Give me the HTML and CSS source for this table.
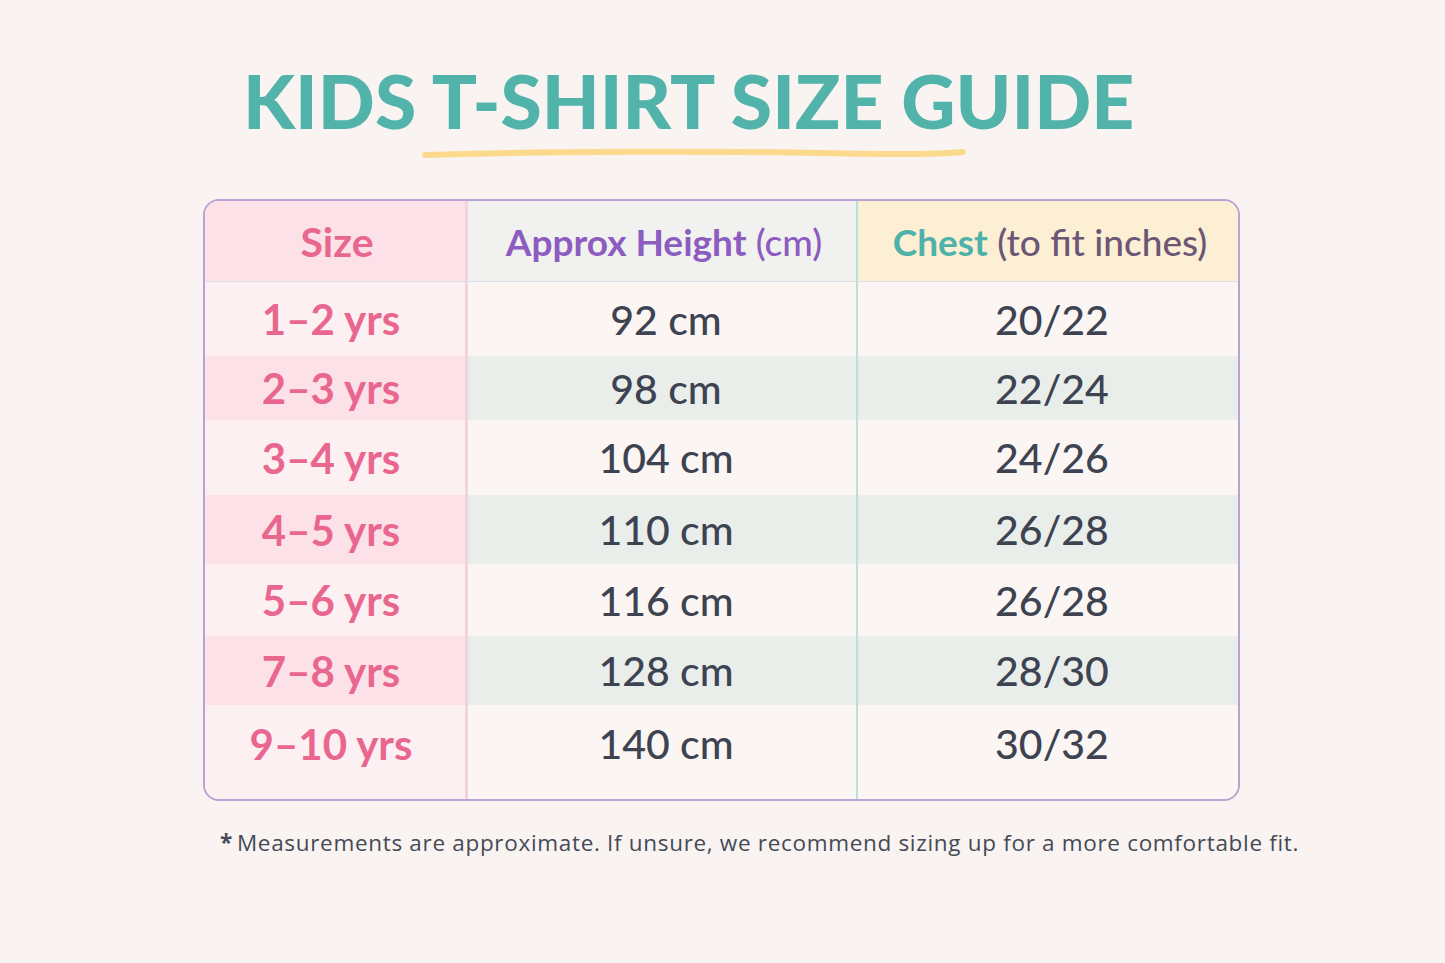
FILE: index.html
```html
<!DOCTYPE html>
<html lang="en">
<head>
<meta charset="utf-8">
<title>Kids T-Shirt Size Guide</title>
<link rel="stylesheet" href="styles.css">
</head>
<body>
<main class="page">
  <header class="title-block">
    <h1 class="title">KIDS T-SHIRT SIZE GUIDE</h1>
    <svg class="underline" width="546" height="12" viewBox="0 0 546 12" aria-hidden="true">
      <path d="M4 7 C 120 3, 300 3, 400 5 S 520 6, 542 4" fill="none" stroke="#fcd98c" stroke-width="6" stroke-linecap="round"/>
    </svg>
  </header>

  <section class="table">
    <div class="row head">
      <div class="cell c1"><span class="pink size-head">Size</span></div>
      <div class="cell c2"><span class="purple">Approx Height</span>&nbsp;<span class="purple light">(cm)</span></div>
      <div class="cell c3"><span class="teal">Chest</span>&nbsp;<span class="plum">(to fit inches)</span></div>
    </div>
    <div class="row odd r1">
      <div class="cell c1"><span class="pink">1–2 yrs</span></div>
      <div class="cell c2">92 cm</div>
      <div class="cell c3">20/22</div>
    </div>
    <div class="row even r2">
      <div class="cell c1"><span class="pink">2–3 yrs</span></div>
      <div class="cell c2">98 cm</div>
      <div class="cell c3">22/24</div>
    </div>
    <div class="row odd r3">
      <div class="cell c1"><span class="pink">3–4 yrs</span></div>
      <div class="cell c2">104 cm</div>
      <div class="cell c3">24/26</div>
    </div>
    <div class="row even r4">
      <div class="cell c1"><span class="pink">4–5 yrs</span></div>
      <div class="cell c2">110 cm</div>
      <div class="cell c3">26/28</div>
    </div>
    <div class="row odd r5">
      <div class="cell c1"><span class="pink">5–6 yrs</span></div>
      <div class="cell c2">116 cm</div>
      <div class="cell c3">26/28</div>
    </div>
    <div class="row even r6">
      <div class="cell c1"><span class="pink">7–8 yrs</span></div>
      <div class="cell c2">128 cm</div>
      <div class="cell c3">28/30</div>
    </div>
    <div class="row odd r7">
      <div class="cell c1"><span class="pink">9–10 yrs</span></div>
      <div class="cell c2">140 cm</div>
      <div class="cell c3">30/32</div>
    </div>
  </section>

  <p class="note"><span class="star">*</span>Measurements are approximate. If unsure, we recommend sizing up for a more comfortable fit.</p>
</main>
</body>
</html>
```

FILE: styles.css
```css
html, body {
  margin: 0;
  padding: 0;
  background: #f9f4f1;
}

body {
  font-family: Lato, "Open Sans", "Liberation Sans", sans-serif;
  color: #3d4350;
  width: 1445px;
  height: 963px;
  overflow: hidden;
}

.page {
  display: flex;
  flex-direction: column;
  padding: 58px 0 0 203px;
}

.title-block {
  display: flex;
  flex-direction: column;
  padding-left: 40px;
}

.title {
  margin: 0;
  font-family: Lato, "Open Sans", sans-serif;
  font-weight: 900;
  font-size: 75px;
  line-height: 84px;
  letter-spacing: 0;
  color: #52b3ab;
  white-space: nowrap;
}

.underline {
  display: block;
  margin: 6px 0 0 178px;
}

.table {
  margin-top: 39px;
  width: 1033px;
  border: 2px solid #b9a2d3;
  border-radius: 16px;
  overflow: hidden;
  display: flex;
  flex-direction: column;
  background: #fbf6f4;
}

.row {
  display: grid;
  grid-template-columns: 263px 390px 380px;
  height: 72px;
}

.cell {
  display: flex;
  align-items: center;
  justify-content: center;
  font-size: 41px;
  font-weight: 500;
  color: #3d4350;
  white-space: nowrap;
}

.c1 {
  border-right: 3px solid #f1d3dd;
  font-weight: 700;
  font-size: 42px;
  padding-right: 8px;
}

.c2 {
  border-right: 2px solid #b5e2da;
  padding-left: 8px;
}

.c3 {
  padding-left: 8px;
}

.head {
  height: 80px;
  border-bottom: 1px solid #dcdde6;
}

.head .cell {
  font-size: 37px;
  padding-right: 0;
  padding-left: 4px;
}

.head .c1 { background: #fce2e8; }
.head .c2 { background: #f1f1ef; }
.head .c3 { background: #fdefd3; }

.head .size-head { font-size: 41px; }

.odd .c1 { background: #fdf0f2; }
.odd .c2, .odd .c3 { background: #fbf6f4; }
.even .c1 { background: #fce2e8; }
.even .c2, .even .c3 { background: #e9eeeb; }

.r1 { height: 74px; }
.r2 { height: 64px; }
.r3 { height: 75px; }
.r4 { height: 69px; }
.r5 { height: 72px; }
.r6 { height: 69px; }
.r7 { height: 94px; }
.r7 .cell { align-items: flex-start; padding-top: 14px; }

.pink { color: #e9678f; font-weight: 700; }
.purple { color: #8c5cc0; font-weight: 700; }
.purple.light { font-weight: 500; }
.teal { color: #4eb1aa; font-weight: 700; }
.plum { color: #6c5677; font-weight: 500; }

.note {
  margin: 26px 0 0 17px;
  font-family: "Open Sans", Lato, sans-serif;
  font-size: 22.5px;
  color: #454a56;
  white-space: nowrap;
  letter-spacing: 0.68px;
}

.star {
  font-weight: 700;
  margin-right: 4px;
}
```
